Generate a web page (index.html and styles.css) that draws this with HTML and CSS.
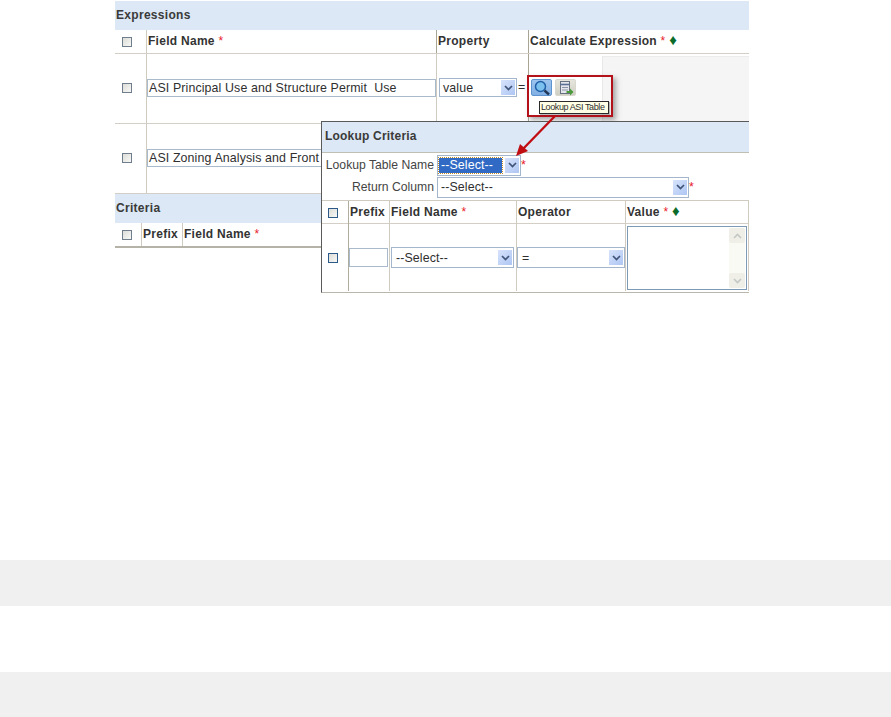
FILE: index.html
```html
<!DOCTYPE html>
<html lang="en">
<head>
<meta charset="utf-8">
<title>Expressions</title>
<link rel="stylesheet" href="styles.css">
</head>
<body>
<svg class="defs" width="0" height="0" aria-hidden="true">
  <symbol id="chev" viewBox="0 0 9 6"><path d="M1 1l3.500 3.500L8 1" fill="none" stroke="#3f5478" stroke-width="1.700"/></symbol>
</svg>
<div class="page">
  <main class="shot">
    <section class="panel">
      <h2 class="band">Expressions</h2>
      <div class="row main-cols head">
        <div class="cell center"><span class="check"></span></div>
        <div class="cell th">Field Name <i class="req">*</i></div>
        <div class="cell th">Property</div>
        <div class="cell th last">Calculate Expression <i class="req">*</i> <i class="dia">♦</i></div>
      </div>
      <div class="row main-cols body-row">
        <div class="cell center"><span class="check"></span></div>
        <div class="cell mid"><div class="input wide">ASI Principal Use and Structure Permit  Use</div></div>
        <div class="cell mid prop-cell"><div class="select prop"><span class="val">value</span><span class="drop"><svg width="9" height="6"><use href="#chev"/></svg></span></div></div>
        <div class="cell last expr"><span class="eq">=</span><div class="sheet"></div></div>
      </div>
      <div class="row main-cols body-row">
        <div class="cell center"><span class="check"></span></div>
        <div class="cell mid"><div class="input wide">ASI Zoning Analysis and Front</div></div>
        <div class="cell"></div>
        <div class="cell last"></div>
      </div>
      <h2 class="band crit">Criteria</h2>
      <div class="row crit-cols head closing">
        <div class="cell center"><span class="check"></span></div>
        <div class="cell th">Prefix</div>
        <div class="cell th last">Field Name <i class="req">*</i></div>
      </div>
    </section>

    <div class="callout">
      <div class="tools">
        <span class="tool on"><svg width="18" height="16" viewBox="0 0 18 16"><circle cx="7.500" cy="6.500" r="5" fill="#7cc0ee" stroke="#1f5fa8" stroke-width="1.500"/><path d="M11.500 10.500l4.500 4" stroke="#23395a" stroke-width="2.400"/></svg></span>
        <span class="tool"><svg width="16" height="16" viewBox="0 0 16 16"><rect x="2.500" y="1.500" width="9" height="12" fill="#e4e6ec" stroke="#667080"/><path d="M2.500 4.500h9" stroke="#5a6f96" stroke-width="1.600"/><path d="M4 7.500h6M4 10h6" stroke="#8a94a8"/><path d="M8.500 11h3.500V8.500l3.500 3.500-3.500 3.500V13H8.500z" fill="#4b9b3d"/></svg></span>
      </div>
      <div class="tip">Lookup ASI Table</div>
    </div>

    <section class="lookup">
      <h2 class="band lk-band">Lookup Criteria</h2>
      <div class="form-row first">
        <span class="lbl">Lookup Table Name</span>
        <div class="select tbl"><span class="val picked">--Select--</span><span class="drop"><svg width="9" height="6"><use href="#chev"/></svg></span></div>
        <i class="req">*</i>
      </div>
      <div class="form-row">
        <span class="lbl">Return Column</span>
        <div class="select ret"><span class="val">--Select--</span><span class="drop"><svg width="9" height="6"><use href="#chev"/></svg></span></div>
        <i class="req">*</i>
      </div>
      <div class="row lk-cols head lk-head">
        <div class="cell center"><span class="check blue"></span></div>
        <div class="cell th">Prefix</div>
        <div class="cell th">Field Name <i class="req">*</i></div>
        <div class="cell th">Operator</div>
        <div class="cell th">Value <i class="req">*</i> <i class="dia">♦</i></div>
      </div>
      <div class="row lk-cols lk-body">
        <div class="cell center"><span class="check blue"></span></div>
        <div class="cell mid"><div class="input prefix"></div></div>
        <div class="cell mid fld-cell"><div class="select fld"><span class="val">--Select--</span><span class="drop"><svg width="9" height="6"><use href="#chev"/></svg></span></div></div>
        <div class="cell mid"><div class="select op"><span class="val">=</span><span class="drop"><svg width="9" height="6"><use href="#chev"/></svg></span></div></div>
        <div class="cell area-cell">
          <div class="area">
            <div class="scroll">
              <span class="sbtn"><svg width="9" height="6"><path d="M1 5l3.500-3.500L8 5" fill="none" stroke="#c4c8c4" stroke-width="1.600"/></svg></span>
              <span class="sbtn"><svg width="9" height="6"><path d="M1 1l3.500 3.500L8 1" fill="none" stroke="#c4c8c4" stroke-width="1.600"/></svg></span>
            </div>
          </div>
        </div>
      </div>
    </section>

    <svg class="arrow" width="60" height="60" viewBox="0 0 60 60" aria-hidden="true">
      <path d="M43 1L10 35" stroke="#c00d12" stroke-width="2.300"/>
      <path d="M4 41l4-12 8 7z" fill="#c00d12"/>
    </svg>
  </main>

  <div class="stripe s1"></div>
  <div class="stripe s2"></div>
</div>
</body>
</html>
```

FILE: styles.css
```css
* { box-sizing: border-box; }
html, body { margin: 0; padding: 0; background: #fff; }
body { font-family: "Liberation Sans", Arial, sans-serif; font-size: 12.400px; color: #2f2f2f; }
.defs { position: absolute; }
.page { width: 891px; height: 717px; overflow: hidden; display: flex; flex-direction: column; }

.shot { position: relative; width: 634px; height: 247px; margin: 1px 0 0 115px; flex: none; }

.band { margin: 0; height: 29px; background: #dce8f5; font-size: 12px; font-weight: bold; line-height: 29px; padding-left: 1px; color: #3a3a3a; letter-spacing: .3px; }

.row { display: grid; }
.main-cols { grid-template-columns: 32px 290px 92px 220px; }
.crit-cols { grid-template-columns: 27px 41px 1fr; }
.lk-cols { grid-template-columns: 27px 41px 127px 109px 123px; }

.head { height: 24px; border-bottom: 1px solid #d3cfc6; }
.body-row { height: 70px; border-bottom: 1px solid #d3cfc6; }
.closing { border-bottom: 2px solid #b5b3a8; height: 25px; }

.cell { border-right: 1px solid #cfcbc0; min-width: 0; }
.cell.last { border-right: 0; }
.main-cols.head .cell:nth-child(2), .main-cols.head .cell:nth-child(3) { border-right-color: #a8a594; }
.body-row .cell:nth-child(3) { border-right-color: #a8a594; }
.th { font-size: 12px; font-weight: bold; line-height: 23px; padding-left: 1px; letter-spacing: .28px; white-space: nowrap; color: #333; }
.center { display: flex; align-items: center; justify-content: flex-start; padding-left: 7px; }
.mid { display: flex; align-items: center; }
.body-row .mid, .body-row .center { padding-bottom: 1px; }
.body-row .prop-cell { padding: 0 0 2px 2px; }
.fld-cell { padding-left: 1px; }
.lk-cols .center { padding-left: 6px; }

.req { color: #e8202a; font-style: normal; font-weight: normal; line-height: 1; }
.dia { color: #0b6b2a; font-style: normal; font-size: 15px; line-height: 0; letter-spacing: 0; }

.check { width: 10px; height: 10px; border: 1px solid #6f7d8c; background: linear-gradient(135deg, #dcdcd8, #f8f8f6); display: block; }
.check.blue { border-color: #2e5a8a; }

.input { height: 18px; border: 1px solid #a9bacd; background: #fff; line-height: 16px; padding-left: 1px; white-space: pre; overflow: hidden; letter-spacing: .12px; }
.input.wide { width: 289px; }
.input.prefix { width: 39px; height: 19px; border-color: #a8bacb; }

.select { display: flex; align-items: center; height: 19px; border: 1px solid #a4b6cc; background: #fff; padding: 1px; }
.select .val { flex: 1; padding-left: 2px; white-space: nowrap; overflow: hidden; letter-spacing: .1px; }
.drop { width: 14px; height: 15px; background: linear-gradient(135deg, #d7e3fb, #aec6f3); display: flex; align-items: center; justify-content: center; flex: none; }
.prop { width: 78px; }
.fld { width: 123px; height: 21px; }
.op { width: 108px; height: 21px; }
.fld .val, .op .val { padding-left: 3px; }

.expr { position: relative; display: flex; }
.eq { position: absolute; left: -11px; top: 25px; line-height: 16px; }
.sheet { margin: 2px 0 0 73px; flex: 1; height: 66px; background: #f5f5f5; border-left: 1px solid #e8e8e8; border-top: 1px solid #ececec; }

.callout { position: absolute; left: 412px; top: 74px; width: 86px; height: 42px; border: 2px solid #b3121a; box-shadow: 3px 3px 5px rgba(90, 90, 90, .5); padding: 2px 2px 0; }
.tools { display: flex; gap: 3px; }
.tool { width: 21px; height: 17px; border-radius: 2px; background: linear-gradient(#e6e6de, #cfcfc4); border: 1px solid #d8d8cf; display: flex; align-items: center; justify-content: center; }
.tool.on { background: linear-gradient(#9cc4ee, #82b0e4); border-color: #5d93cf; }
.tip { position: absolute; left: 10px; top: 24px; width: 70px; height: 13px; border: 1px solid #2a2a2a; background: #ffffe6; box-shadow: 1px 1px 1px rgba(0,0,0,.25); font-size: 9px; line-height: 11px; white-space: nowrap; padding-left: 1px; letter-spacing: -.4px; }

.lookup { position: absolute; left: 206px; top: 120px; width: 428px; height: 172px; background: #fff; border-left: 1px solid #5a5a5a; border-top: 1px solid #5a5a5a; border-bottom: 1px solid #b9b7ad; }
.lk-band { height: 31px; line-height: 29px; border-bottom: 1px solid #c1bfb3; padding-left: 3px; letter-spacing: .2px; }
.form-row { height: 22px; display: flex; align-items: center; }
.form-row.first { margin-top: 1px; }
.lbl { width: 115px; padding-right: 3px; text-align: right; white-space: nowrap; font-size: 12.200px; color: #444; }
.tbl { width: 84px; height: 21px; }
.picked { background: #316ac5; color: #fff; outline: 1px dotted #c58a20; height: 15px; line-height: 15px; margin-right: 3px; }
.ret { width: 252px; height: 21px; }
.lk-head { margin-top: 2px; border-top: 1px solid #cfcbc0; height: 24px; }
.lk-head .cell:first-child, .lk-body .cell:first-child { border-right-color: #b0ad9f; }
.lk-body { height: 67px; }
.area-cell { padding: 2px 1px 1px 1px; }
.area { height: 64px; border: 1px solid #7f9ab5; background: #fff; display: flex; justify-content: flex-end; }
.scroll { width: 16px; margin: 1px; background: #fafaf5; display: flex; flex-direction: column; justify-content: space-between; }
.sbtn { height: 15px; background: #efefe8; display: flex; align-items: center; justify-content: center; border-radius: 2px; }

.arrow { position: absolute; left: 397px; top: 114px; }

.stripe { height: 46px; background: #f0f0f0; flex: none; }
.s1 { margin-top: 312px; }
.s2 { margin-top: 66px; }
```
